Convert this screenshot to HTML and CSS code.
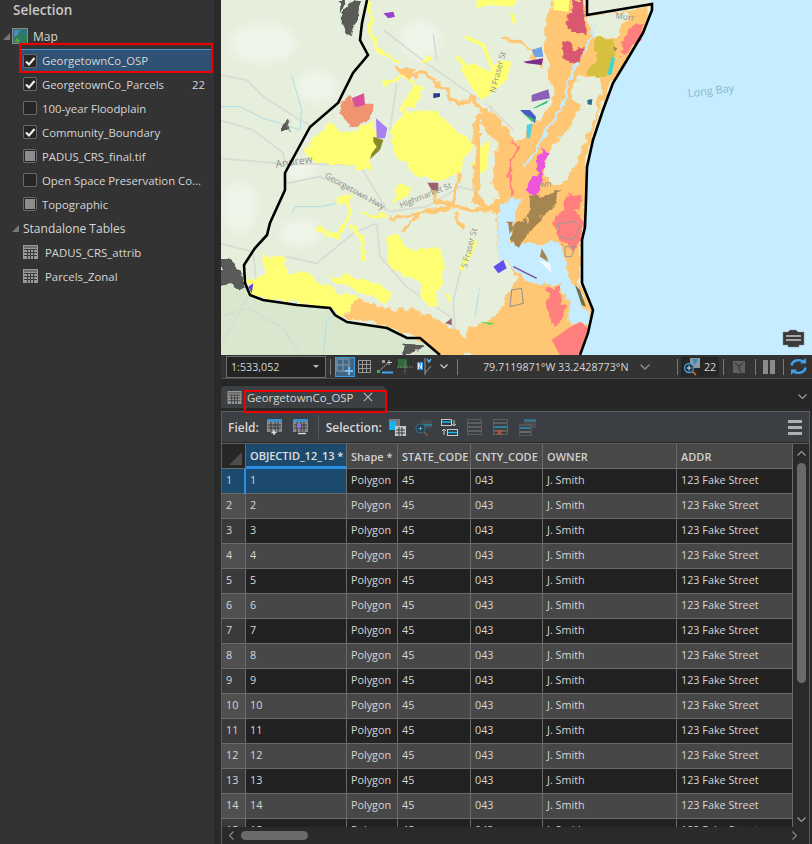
FILE: index.html
```html
<!DOCTYPE html>
<html lang="en">
<head>
    <meta charset="UTF-8">
    <meta name="viewport" content="width=device-width, initial-scale=1.0">
    <title>GeorgetownCo_OSP</title>
    <link rel="stylesheet" href="styles.css">
</head>
<body>
<svg class="defs" width="0" height="0">
    <filter id="rough" color-interpolation-filters="sRGB">
        <feTurbulence type="fractalNoise" baseFrequency=".03" numOctaves="3" seed="4"/>
        <feDisplacementMap in="SourceGraphic" scale="34" xChannelSelector="R" yChannelSelector="G"/>
    </filter>
    <filter id="soft"><feGaussianBlur stdDeviation="14"/></filter>
    <symbol id="check" viewBox="0 0 14 14">
        <path d="M3 7.5 L6 10.5 L11.5 4" fill="none" stroke="#f2f2f2" stroke-width="2"/>
    </symbol>
    <symbol id="grid" viewBox="0 0 15 14">
        <rect x="0" y="0" width="15" height="14" fill="#9a9a9a"/>
        <rect x="1" y="1" width="13" height="2" fill="#6d6d6d"/>
        <path d="M1 4.5H14M1 7.5H14M1 10.5H14" stroke="#3a3a3a" stroke-width="1"/>
        <path d="M4.5 4V14M7.5 4V14M10.5 4V14" stroke="#3a3a3a" stroke-width="1"/>
    </symbol>
    <symbol id="rows" viewBox="0 0 15 16">
        <rect x="0.5" y="0.5" width="14" height="15" fill="#3c3f42" stroke="#5e5e5e"/>
        <path d="M1 4H14M1 8H14M1 12H14" stroke="#5e5e5e" stroke-width="2"/>
    </symbol>
</svg>

<div class="app">
    <aside class="sidebar">
        <h2 class="panel-title">Selection</h2>
        <ul class="tree">
            <li class="tree-row group">
                <span class="twisty"></span>
                <svg class="map-icon" width="16" height="16" viewBox="0 0 16 16">
                    <rect x="0.5" y="0.5" width="15" height="15" fill="#2e7d5a" stroke="#8a8a8a"/>
                    <path d="M2 2H8L5 8L2 9Z" fill="#3f8fc0"/>
                    <path d="M9 2H14V7L11 6Z" fill="#2b6fa8"/>
                    <path d="M2 14L5 10L8 13L7 14Z" fill="#5aa04a"/>
                </svg>
                <span>Map</span>
            </li>
            <li class="tree-row layer selected"><span class="box"><svg width="14" height="14"><use href="#check"/></svg></span><span>GeorgetownCo_OSP</span></li>
            <li class="tree-row layer"><span class="box"><svg width="14" height="14"><use href="#check"/></svg></span><span>GeorgetownCo_Parcels</span><span class="count">22</span></li>
            <li class="tree-row layer"><span class="box"></span><span>100-year Floodplain</span></li>
            <li class="tree-row layer"><span class="box"><svg width="14" height="14"><use href="#check"/></svg></span><span>Community_Boundary</span></li>
            <li class="tree-row layer"><span class="box mixed"></span><span>PADUS_CRS_final.tif</span></li>
            <li class="tree-row layer"><span class="box"></span><span>Open Space Preservation Co...</span></li>
            <li class="tree-row layer"><span class="box mixed"></span><span>Topographic</span></li>
            <li class="tree-row section"><span class="twisty"></span><span>Standalone Tables</span></li>
            <li class="tree-row standalone"><svg width="15" height="14"><use href="#grid"/></svg><span>PADUS_CRS_attrib</span></li>
            <li class="tree-row standalone"><svg width="15" height="14"><use href="#grid"/></svg><span>Parcels_Zonal</span></li>
        </ul>
    </aside>

    <main class="workspace">
        <div class="map">
            <svg class="map-canvas" width="591" height="355" viewBox="221 0 591 355">
                <rect x="221" y="0" width="591" height="355" fill="#e5efdb"/>
                <g transform="translate(220 0) scale(.33333)">
                    <path d="M90 885L130 900L230 915L330 925L345 945L380 965L500 985L560 1015L600 1015L660 1065L0 1065L0 855L75 850Z" fill="#d9e7ce"/>
                    <g fill="#f0f5ea" filter="url(#soft)">
                        <ellipse cx="130" cy="130" rx="100" ry="60"/>
                        <ellipse cx="290" cy="260" rx="60" ry="50"/>
                        <ellipse cx="240" cy="510" rx="50" ry="30"/>
                        <ellipse cx="60" cy="620" rx="50" ry="80"/>
                        <ellipse cx="600" cy="120" rx="60" ry="60"/>
                        <ellipse cx="240" cy="700" rx="60" ry="40"/>
                    </g>
                    <g fill="none" stroke="#d8dcd4" stroke-width="5">
                        <path d="M0 225L80 240L130 290L240 360L270 375"/>
                        <path d="M0 360L100 390L190 460L200 520"/>
                        <path d="M0 475L170 490L420 495L500 630"/>
                        <path d="M200 550L300 530L390 570L510 635L620 620L720 560L820 590"/>
                        <path d="M470 670L480 770L560 860L690 950L700 990"/>
                        <path d="M730 780L700 900L705 1000"/>
                        <path d="M0 730L100 755L110 860M200 770L290 790L400 700L470 670"/>
                        <path d="M0 950L85 925L190 985L240 1065M85 890L0 1040"/>
                        <path d="M490 90L620 190L720 260L810 320L880 390"/>
                        <path d="M640 100L650 180M530 250L510 390M860 150L820 290L800 400L820 560"/>
                    </g>
                    <g fill="none" stroke="#b2dde8" stroke-width="3">
                        <path d="M0 320L60 320L130 355L180 370L240 390L245 330L215 225"/>
                        <path d="M215 640L225 620L300 620L350 610"/>
                        <path d="M310 1065L320 960L345 945M780 860L765 950"/>
                    </g>
                    <g fill="#5a5a58" filter="url(#rough)">
                        <path d="M365 35L395 5L420 10L410 60L395 105L365 70Z"/>
                        <path d="M350 0L375 0L360 40Z"/>
                        <path d="M188 375L205 358L215 390L190 395Z"/>
                        <path d="M0 780L40 780L70 830L78 870L30 850L0 855Z"/>
                        <path d="M540 1035L580 1030L610 1040L600 1055L560 1060Z"/>
                    </g>
                    <g filter="url(#rough)">
                        <g fill="#ffff73">
                            <path d="M250 450L330 365L360 400L400 390L450 370L480 410L470 440L445 490L450 515L400 495L300 490L270 480Z"/>
                            <path d="M510 450L520 370L560 335L640 330L700 380L760 435L730 480L720 520L650 545L590 530L560 495L520 470Z"/>
                            <path d="M85 840L130 830L130 790L120 750L150 770L190 775L200 810L280 825L300 850L340 865L415 895L370 945L330 920L230 905L130 895L90 880Z"/>
                            <path d="M330 830L400 830L480 855L520 880L500 910L440 880L340 850Z"/>
                            <path d="M500 710L530 705L560 740L660 750L675 800L660 860L670 880L700 900L680 905L660 860L650 925L620 915L600 850L540 820L510 790Z"/>
                            <path d="M510 610L530 560L580 555L570 590L520 610Z"/>
                            <path d="M540 340L580 250L610 260L590 320Z"/>
                            <path d="M760 490L775 480L770 540L755 530Z"/>
                        </g>
                        <g fill="none" stroke="#ffff73" stroke-width="11">
                            <path d="M290 685L350 710L380 670L385 640L390 590M350 605L400 590M420 640L500 650M390 680L425 710L430 780"/>
                            <path d="M445 0L450 90L460 130L530 190M480 260L540 230L590 250M610 190L630 170"/>
                            <path d="M770 720L720 810"/>
                        </g>
                        <g fill="none" stroke="#ffc773" stroke-width="11">
                            <path d="M530 205L590 220L650 240L690 290L720 320L750 290L780 320L830 360L880 420"/>
                            <path d="M510 650L620 640L700 620L820 640M640 570L650 600L700 620M720 520L700 620M550 690L610 640M700 640L730 680"/>
                        </g>
                        <path d="M530 205L585 205L570 240L540 230Z" fill="#ffc773"/>
                        <path d="M415 895L480 920L600 935L680 975L740 1010L745 985L840 960L870 890L900 840L900 1065L660 1065L590 1010L500 975L380 950L370 945Z" fill="#ffc773"/>
                        <path d="M380 285L420 320L455 320L440 360L415 380L385 370L355 345L360 320Z" fill="#f09370"/>
                    </g>
                    <path d="M395 295L432 280L435 315L405 322Z" fill="#d9509a"/>
                    <path d="M468 355L502 385L495 415L470 415Z" fill="#a980f0"/>
                    <path d="M460 410L490 420L480 450L450 478L455 460L470 440L460 425Z" fill="#8a8a28"/>
                    <path d="M490 40L520 35L525 50L505 55Z" fill="#9a40d0"/>
                    <path d="M640 280L660 280L660 290L640 295Z" fill="#2a3a90"/>
                    <path d="M622 548L655 548L655 572L635 570Z" fill="#9c6070"/>
                    <path d="M85 860L100 850L95 880Z" fill="#5a40d8"/>
                    <path d="M675 970L695 955L695 975Z" fill="#9c6070"/>
                    <path d="M780 970L810 960L830 970Z" fill="#55dd55"/>
                    <g class="map-label">
                        <text class="town-label" x="168" y="503" transform="rotate(-8 168 503)">Andrew</text>
                        <text x="313" y="532" transform="rotate(29 313 532)">Georgetown Hwy</text>
                        <text x="543" y="625" transform="rotate(-22 543 625)">Highmarket St</text>
                        <text x="740" y="805" transform="rotate(-75 740 805)">S Fraser St</text>
                    </g>
                </g>
                <g transform="translate(480 0) scale(.33333)">
                    <g filter="url(#rough)">
                        <path d="M220 -10L320 -10L322 48L510 20L490 100L400 240L350 340L322 480L318 600L315 680L300 720L300 850L338 930L325 1075L-20 1075L-20 985L60 930L110 835L60 770L45 640L-20 610L-20 350L30 340L60 390L100 420L130 410L170 360L210 320L220 260L205 230L190 100Z" fill="#ffc773"/>
                        <path d="M322 50L440 35L430 85L405 115L345 112Z" fill="#e5efdb"/>
                        <path d="M300 220L350 230L365 270L330 390L300 460L260 545L210 550L195 500L215 440L260 390L300 330L270 290Z" fill="#e5efdb"/>
                        <path d="M0 360L30 420L55 440L45 480L40 560L60 600L30 610L0 590Z" fill="#e5efdb"/>
                        <path d="M0 660L35 630L50 700L60 770L30 790L0 780Z" fill="#e5efdb"/>
                        <path d="M0 800L40 790L100 830L60 920L20 960L0 960Z" fill="#e5efdb"/>
                        <path d="M0 30L90 20L190 120L205 230L210 290L130 340L0 300Z" fill="#e5efdb"/>
                        <path d="M0 330L30 345L70 395M60 120L130 130L190 200" fill="none" stroke="#ffc773" stroke-width="9"/>
                        <path d="M350 70L300 170L260 260L240 330L180 430L130 500" fill="none" stroke="#c5ecff" stroke-width="7"/>
                        <path d="M50 640L75 600L130 590L100 680L90 730L180 730L250 730L250 780L300 850L315 930L330 940L320 965L270 975L265 900L240 855L140 845L95 810L60 770Z" fill="#c5ecff"/>
                        <path d="M250 760L285 740L300 850L320 930L295 860L265 830Z" fill="#ffc773"/>
                    </g>
                    <path d="M515 0L996 0L996 1065L300 1065L325 1000L338 930L305 850L305 720L315 680L318 600L320 500L340 420L370 330L400 250L440 180L490 100L515 30L515 12Z" fill="#c5ecff"/>
                    <g fill="#ffff73">
                        <path d="M0 440L30 420L20 510L0 520Z"/>
                        <path d="M-10 0L110 0L100 20L30 15L-10 25Z"/>
                        <path d="M222 0L268 0L265 35L220 30Z"/>
                        <path d="M-60 205L-20 190L30 215L60 180L95 185L80 240L40 275L5 300L-20 270Z"/>
                    </g>
                    <path d="M-45 110L10 135L40 210M95 40L105 70M-70 170L-20 220" fill="none" stroke="#ffff73" stroke-width="11"/>
                    <g filter="url(#rough)">
                        <path d="M275 0L315 0L320 100L262 95L255 70L270 40Z" fill="#d95870"/>
                        <path d="M250 125L275 120L280 145L305 145L300 185L270 195L245 175L240 150Z" fill="#d95870"/>
                        <g fill="#ff7f7f">
                            <path d="M430 120L470 70L490 70L470 125L440 165L420 160Z"/>
                            <path d="M260 580L295 585L310 610L290 640L315 665L305 710L285 750L255 730L230 700L220 660L250 625Z"/>
                            <path d="M195 860L245 860L250 930L240 985L210 975Z"/>
                        </g>
                        <path d="M95 425L120 440L90 490L95 590" fill="none" stroke="#ff7f7f" stroke-width="7"/>
                        <path d="M345 120L370 108L400 120L405 170L385 230L345 232L320 215L350 170Z" fill="#d6c040"/>
                        <g fill="#a58550">
                            <path d="M145 590L245 570L215 620L180 670L130 720L115 740L90 715L105 680L140 660Z"/>
                            <path d="M80 665L100 665L100 695L85 695Z"/>
                        </g>
                        <path d="M185 445L213 460L195 490L190 550L165 585L145 585L150 545L175 520L168 490Z" fill="#ee55dd"/>
                    </g>
                    <path d="M300 965L325 985L295 1065L240 1065L215 1020L265 985Z" fill="#ff7f7f"/>
                    <path d="M395 170L405 175L395 225L382 225Z" fill="#3fd8d0"/>
                    <path d="M185 745L200 770L205 785L180 770Z" fill="#a58550"/>
                    <path d="M400 140L412 145L405 155Z" fill="#a58550"/>
                    <path d="M155 150L185 140L190 170L165 172Z" fill="#6fa5e8"/>
                    <path d="M130 185L190 175L185 195L140 190Z" fill="#7b2d8b"/>
                    <path d="M155 285L205 268L210 295L155 305Z" fill="#8a60b8"/>
                    <path d="M158 325L205 300L200 310L165 325Z" fill="#35c080"/>
                    <path d="M120 330L150 330L168 350L165 370L135 345Z" fill="#4a58c8"/>
                    <path d="M130 340L165 360L155 365Z" fill="#30d060"/>
                    <path d="M140 375L158 370L150 415L140 415Z" fill="#50d0e0"/>
                    <path d="M322 300L337 297L335 315L323 313Z" fill="#2c6e8a"/>
                    <path d="M40 800L70 780L80 805L55 820Z" fill="#5f50f0"/>
                    <path d="M285 855L300 870L318 920L305 915Z" fill="#6e7040"/>
                    <path d="M100 800L170 835" fill="none" stroke="#7b4d9b" stroke-width="4"/>
                    <path d="M175 780L210 790L215 820Z" fill="#f4fbff"/>
                    <path d="M95 870L125 865L130 910L90 920Z" fill="none" stroke="#8f8f8f" stroke-width="3"/>
                    <path d="M235 670L285 665L300 680L280 720L240 710ZM255 740L285 740L275 770L255 770Z" fill="none" stroke="#9a9a9a" stroke-width="3"/>
                    <path d="M0 965L45 970L30 975Z" fill="#55dd55"/>
                    <g class="map-label">
                        <text x="405" y="55" transform="rotate(8 405 55)">Murr</text>
                        <text x="180" y="562" transform="rotate(-6 180 562)">wn</text>
                        <text x="45" y="280" transform="rotate(-75 45 280)">N Fraser St</text>
                    </g>
                    <text class="bay-label" x="625" y="292" transform="rotate(-7 625 292)">Long Bay</text>
                </g>
                <path d="M367 0L362 23L360 40L368 55L353 73L338 103L310 127L285 173L285 190L270 223L267 235L255 248L244 265L245 283L250 295L263 300L297 305L330 308L335 315L347 322L387 328L407 338L420 338L440 355" fill="none" stroke="#000" stroke-width="2.6"/>
                <path d="M587 0L587 15L652 4L652 10L643 33L627 60L613 83L603 110L593 140L587 167L586 200L585 227L582 240L582 283L593 310L588 333L580 355" fill="none" stroke="#000" stroke-width="2.6"/>
                <g>
                    <path d="M783 332H788L790 330H796L798 332H804V345H799V347H788V345H783Z" fill="#3a3a3a" stroke="#8a8a8a" stroke-width=".5"/>
                    <path d="M786 336H801M786 340H801" stroke="#c9c9c9" stroke-width="1.4"/>
                </g>
            </svg>
        </div>

        <div class="statusbar">
            <div class="scale-box"><span>1:533,052</span><span class="caret"></span></div>
            <span class="sep first"></span>
            <span class="snap-btn">
                <svg width="18" height="18" viewBox="0 0 18 18">
                    <path d="M1 1H13V13H1ZM7 1V13M1 7H13" fill="none" stroke="#8f9aa4" stroke-width="1"/>
                    <path d="M13 9V17M9 13H17" stroke="#7cc0f0" stroke-width="2"/>
                </svg>
            </span>
            <svg class="st-icon grid-btn" width="13" height="13" viewBox="0 0 13 13">
                <path d="M.5 .5H12.5V12.5H.5ZM4.5 .5V12.5M8.5 .5V12.5M.5 4.5H12.5M.5 8.5H12.5" fill="none" stroke="#9a9a9a"/>
            </svg>
            <svg class="st-icon snap-icon" width="16" height="14" viewBox="0 0 16 14">
                <path d="M2 11L11 3" stroke="#c9c9c9" stroke-dasharray="2 1"/>
                <rect x="0" y="10" width="3" height="3" fill="#39b56a"/>
                <rect x="5" y="0" width="3" height="3" fill="#a0a0a0"/>
                <path d="M12 0V5M10 2.5H15" stroke="#c9c9c9"/>
                <path d="M5 12.5H16" stroke="#3fa9f5" stroke-width="2"/>
            </svg>
            <svg class="st-icon guide-icon" width="16" height="15" viewBox="0 0 16 15">
                <rect x="1" y="0" width="9" height="9" fill="#2f6b3a"/>
                <path d="M0 8H16M8 2V15" stroke="#7a7a7a" stroke-dasharray="2 1"/>
            </svg>
            <svg class="st-icon north-icon" width="16" height="17" viewBox="0 0 16 17">
                <rect x="0" y="4" width="6" height="8" fill="#2f8fe0"/>
                <path d="M1.5 11V5L4.5 11V5" fill="none" stroke="#e8f4ff"/>
                <path d="M8 0V17M8 15L14 8" stroke="#9a9a9a"/>
                <path d="M10 1L12 4L14 1" fill="none" stroke="#5cb8f0" stroke-width="1.4"/>
            </svg>
            <svg class="chev-small" width="8" height="5" viewBox="0 0 8 5"><path d="M.5 .5L4 4L7.5 .5" fill="none" stroke="#d0d0d0" stroke-width="1.2"/></svg>
            <span class="sep second"></span>
            <span class="coords">79.7119871°W 33.2428773°N</span>
            <svg class="chev-coords" width="10" height="6" viewBox="0 0 10 6"><path d="M.5 .5L5 5L9.5 .5" fill="none" stroke="#8f8f8f" stroke-width="1.4"/></svg>
            <span class="sep third"></span>
            <span class="sel-count">
                <svg width="18" height="18" viewBox="0 0 18 18">
                    <path d="M7 0H17V10H10L7 6Z" fill="#8f9aa0"/>
                    <path d="M9 1L12 7L15 1Z" fill="#2f8fc0"/>
                    <circle cx="6" cy="10" r="4.5" fill="#1d2f3d" stroke="#3fa0d8" stroke-width="1.3"/>
                    <path d="M6 7.5V12.5M3.5 10H8.5" stroke="#c9e4f5"/>
                    <path d="M9.5 13.5L13 17" stroke="#b06a2a" stroke-width="2"/>
                </svg>
                <span>22</span>
            </span>
            <span class="sep after-count"></span>
            <svg class="st-icon" width="12" height="12" viewBox="0 0 12 12">
                <rect width="12" height="12" fill="#5f5f5f"/>
                <path d="M2 2L6 5L10 2M6 5V8L8 11" fill="none" stroke="#2b2b2b"/>
            </svg>
            <span class="sep before-pause"></span>
            <span class="pause"><i></i><i></i></span>
            <span class="sep before-refresh"></span>
            <svg width="17" height="17" viewBox="0 0 17 17">
                <path d="M1.5 7.5A7 6 0 0 1 13.5 4" fill="none" stroke="#3fa0e8" stroke-width="2.4"/>
                <path d="M10 5.5H16V0Z" fill="#3fa0e8"/>
                <path d="M15.5 9.5A7 6 0 0 1 3.5 13" fill="none" stroke="#3fa0e8" stroke-width="2.4"/>
                <path d="M7 11.5H1V17Z" fill="#3fa0e8"/>
            </svg>
        </div>

        <div class="tabstrip">
            <div class="tab">
                <svg width="15" height="13"><use href="#grid"/></svg>
                <span>GeorgetownCo_OSP</span>
                <svg class="tab-close" width="10" height="10" viewBox="0 0 11 11"><path d="M1 1L10 10M10 1L1 10" stroke="#bdbdbd" stroke-width="1.2"/></svg>
            </div>
            <svg class="tab-chevron" width="9" height="5" viewBox="0 0 9 5"><path d="M.5 .5L4.5 4.5L8.5 .5" fill="none" stroke="#9a9a9a" stroke-width="1.2"/></svg>
        </div>

        <section class="pane">
            <div class="toolbar">
                <span class="tool-label">Field:</span>
                <svg class="tool" width="15" height="16" viewBox="0 0 15 16">
                    <rect width="15" height="3" fill="#3f90c8"/>
                    <path d="M0 3H15V13H0Z" fill="#8a8a8a"/>
                    <path d="M1 6H14M1 9H14M4 3V13M8 3V13M11 3V13" stroke="#33363a"/>
                    <path d="M7 11V16M4.5 13.5H9.5" stroke="#e0e0e0" stroke-width="1.4"/>
                </svg>
                <svg class="tool second-tool" width="15" height="16" viewBox="0 0 15 16">
                    <rect width="15" height="3" fill="#3f90c8"/>
                    <path d="M0 3H15V13H0Z" fill="#8a8a8a"/>
                    <path d="M1 6H14M1 9H14M4 3V13M8 3V13M11 3V13" stroke="#33363a"/>
                    <rect x="4" y="5" width="4" height="4" fill="#8a70d8"/>
                    <path d="M5 14.5H13" stroke="#e0e0e0" stroke-width="1.4"/>
                </svg>
                <span class="tool-sep"></span>
                <span class="tool-label">Selection:</span>
                <span class="tool-group">
                    <svg width="17" height="17" viewBox="0 0 17 17">
                        <rect x="0" y="0" width="11" height="11" fill="#7a7a7a"/>
                        <path d="M1 2H7V11H1Z" fill="#16b4f0"/>
                        <rect x="6" y="7" width="11" height="10" fill="#c8c8c8"/>
                        <path d="M7 11H16M7 14H16M10 8V17M13 8V17" stroke="#33363a"/>
                    </svg>
                    <svg width="17" height="17" viewBox="0 0 17 17">
                        <path d="M6 1H17V9H10" fill="#4a4d50"/>
                        <path d="M9 6H17" stroke="#2c8aa8" stroke-width="1.6"/>
                        <circle cx="5.5" cy="9.5" r="4.5" fill="#2b3a45" stroke="#2f7396" stroke-width="1.2"/>
                        <path d="M5.5 7.5V11.5M3.5 9.5H7.5" stroke="#6fa8c8"/>
                        <path d="M9 13L12.5 16.5" stroke="#7c5a38" stroke-width="1.6"/>
                    </svg>
                    <svg width="17" height="17" viewBox="0 0 17 17">
                        <rect x=".5" y=".5" width="10" height="6" fill="#33363a" stroke="#c8c8c8"/>
                        <path d="M1 3H10" stroke="#16b4f0" stroke-width="1.5"/>
                        <rect x="6.5" y="10.5" width="10" height="6" fill="#33363a" stroke="#c8c8c8"/>
                        <path d="M7 13.5H16" stroke="#16b4f0" stroke-width="1.5"/>
                        <path d="M13 1V7M11 5L13 7L15 5M3 10V16M1 12L3 10L5 12" fill="none" stroke="#c8c8c8"/>
                    </svg>
                    <svg width="15" height="16"><use href="#rows"/></svg>
                    <svg width="15" height="16" viewBox="0 0 15 16">
                        <use href="#rows" width="15" height="16"/>
                        <path d="M1 8H14" stroke="#2b7f9c" stroke-width="2"/>
                        <path d="M4 11L9 16M9 11L4 16" stroke="#b0543a" stroke-width="1.8"/>
                    </svg>
                    <svg width="17" height="17" viewBox="0 0 17 17">
                        <rect x="5" y="0" width="12" height="9" fill="#4a4d50"/>
                        <path d="M5 1.5H17" stroke="#2b7f9c" stroke-width="2"/>
                        <rect x="0" y="6" width="12" height="11" fill="#3c3f42" stroke="#6a6a6a"/>
                        <path d="M1 9H11" stroke="#2b7f9c" stroke-width="2"/>
                        <path d="M1 13H11" stroke="#6a6a6a" stroke-width="2"/>
                    </svg>
                </span>
                <span class="menu-btn"><i></i><i></i><i></i></span>
            </div>

            <div class="table-area">
                <div class="table-clip">
                    <table>
                        <thead>
                            <tr>
                                <th class="col-row"><span class="corner"></span></th>
                                <th class="col-id active">OBJECTID_12_13 *</th>
                                <th class="col-shape">Shape *</th>
                                <th class="col-state">STATE_CODE</th>
                                <th class="col-cnty">CNTY_CODE</th>
                                <th class="col-owner">OWNER</th>
                                <th class="col-addr">ADDR</th>
                            </tr>
                        </thead>
                        <tbody id="rowsBody"></tbody>
                    </table>
                </div>
                <div class="vscroll">
                    <svg width="9" height="5" viewBox="0 0 9 5"><path d="M.5 4.5L4.5 .5L8.5 4.5" fill="none" stroke="#9a9a9a" stroke-width="1.2"/></svg>
                    <span class="vthumb"></span>
                    <svg class="vdown" width="9" height="5" viewBox="0 0 9 5"><path d="M.5 .5L4.5 4.5L8.5 .5" fill="none" stroke="#9a9a9a" stroke-width="1.2"/></svg>
                </div>
            </div>
            <div class="hscroll">
                <svg width="5" height="9" viewBox="0 0 5 9"><path d="M4.5 .5L.5 4.5L4.5 8.5" fill="none" stroke="#8a8a8a" stroke-width="1.2"/></svg>
                <span class="hthumb"></span>
                <svg class="hright" width="5" height="9" viewBox="0 0 5 9"><path d="M.5 .5L4.5 4.5L.5 8.5" fill="none" stroke="#8a8a8a" stroke-width="1.2"/></svg>
            </div>
        </section>
    </main>
</div>

<script>
    // 15 rows, last one is cut off by the scroll area
    const rowsBody = document.getElementById('rowsBody');
    for (let i = 1; i <= 15; i++) {
        const row = document.createElement('tr');
        if (i === 1) row.className = 'current';
        row.innerHTML = `
            <td class="row-head">${i}</td>
            <td class="id-cell">${i}</td>
            <td>Polygon</td>
            <td>45</td>
            <td>043</td>
            <td>J. Smith</td>
            <td>123 Fake Street</td>
        `;
        rowsBody.appendChild(row);
    }
</script>
</body>
</html>
```

FILE: styles.css
```css
* {
    box-sizing: border-box;
}
body {
    margin: 0;
    background-color: #2a2a2a;
    color: #d6d6d6;
    font-family: 'Open Sans', 'Noto Sans', sans-serif;
    font-size: 12px;
    overflow: hidden;
}
.defs {
    display: block;
    height: 0;
}
.app {
    display: flex;
    height: 844px;
    overflow: hidden;
}

/* contents pane */
.sidebar {
    width: 214px;
    flex: none;
    background-color: #333333;
    margin-right: 7px;
}
.panel-title {
    margin: 0;
    padding: 0 0 0 13px;
    height: 24px;
    line-height: 20px;
    font-size: 13.5px;
    font-weight: 600;
    color: #c8c8c8;
}
.tree {
    list-style: none;
    margin: 0;
    padding: 0;
}
.tree-row {
    display: flex;
    align-items: center;
    height: 24px;
    white-space: nowrap;
}
.twisty {
    width: 0;
    height: 0;
    border-left: 7px solid transparent;
    border-bottom: 7px solid #777;
}
.group {
    padding-left: 3px;
}
.map-icon {
    margin: 0 5px 0 2px;
}
.layer {
    padding-left: 23px;
    gap: 5px;
    font-size: 11.35px;
}
.box {
    width: 14px;
    height: 14px;
    flex: none;
    border: 1px solid #6b6b6b;
    border-radius: 2px;
    background-color: #262626;
    position: relative;
}
.box svg {
    position: absolute;
    left: -1px;
    top: -1px;
}
.box.mixed::after {
    content: '';
    display: block;
    width: 10px;
    height: 10px;
    margin: 1px;
    background-color: #8c8c8c;
}
.count {
    margin-left: auto;
    margin-right: 9px;
}
.selected {
    position: relative;
    height: 22px;
    margin: 1px 1px 1px 21px;
    padding-left: 2px;
    background-color: #2f5173;
    border-top: 1px solid #4d93cf;
}
.selected::after {
    content: '';
    position: absolute;
    left: -2px;
    top: -7px;
    right: 0;
    bottom: -2px;
    border: 2px solid #f00000;
}
.section {
    padding-left: 12px;
    gap: 4px;
}
.standalone {
    padding-left: 23px;
    gap: 7px;
    font-size: 11.4px;
}

/* map view */
.workspace {
    flex: 1;
    min-width: 0;
    display: flex;
    flex-direction: column;
}
.map {
    height: 355px;
    flex: none;
}
.map-canvas {
    display: block;
}
.map-label text {
    font-size: 25px;
    fill: #8f8f8f;
}
.map-label .town-label {
    font-size: 31px;
}
.bay-label {
    font-size: 33px;
    fill: #86b9cc;
}

.statusbar {
    height: 24px;
    flex: none;
    display: flex;
    align-items: center;
    padding-left: 5px;
    font-size: 10.7px;
    background-color: #333333;
    border-bottom: 1px solid #4d4d4d;
}
.scale-box {
    width: 100px;
    height: 22px;
    display: flex;
    align-items: center;
    justify-content: space-between;
    padding: 0 6px 0 4px;
    background-color: #232323;
    border: 1px solid #6e6e6e;
}
.caret {
    width: 0;
    height: 0;
    border-left: 3px solid transparent;
    border-right: 3px solid transparent;
    border-top: 3px solid #bbb;
}
.sep {
    width: 1px;
    height: 16px;
    flex: none;
    background-color: #7a7a7a;
}
.sep.first {
    margin: 0 4px;
}
.snap-btn {
    width: 20px;
    height: 20px;
    flex: none;
    display: flex;
    align-items: center;
    justify-content: center;
    background-color: #3f6788;
    border: 1px solid #3f9ae0;
}
.grid-btn {
    margin-left: 3px;
}
.snap-icon {
    margin-left: 6px;
}
.guide-icon {
    margin-left: 4px;
}
.north-icon {
    margin-left: 4px;
}
.chev-small {
    margin-left: 7px;
}
.sep.second {
    margin-left: 9px;
}
.coords {
    margin-left: 25px;
    white-space: nowrap;
    width: 147px;
}
.chev-coords {
    margin-left: 10px;
}
.sep.third {
    margin: 0 3px 0 27px;
}
.sel-count {
    display: flex;
    align-items: center;
    gap: 3px;
    height: 20px;
    width: 38px;
    padding-left: 2px;
    background-color: #262626;
}
.sep.after-count {
    margin: 0 9px 0 4px;
}
.sep.before-pause {
    margin: 0 7px 0 10px;
}
.sep.before-refresh {
    margin: 0 6px 0 8px;
}
.pause {
    display: flex;
    gap: 2px;
}
.pause i {
    display: block;
    width: 5px;
    height: 14px;
    background-color: #8a8a8a;
}

/* table view */
.tabstrip {
    height: 29px;
    flex: none;
    display: flex;
    align-items: flex-end;
    font-size: 11.4px;
    background-color: #262626;
    position: relative;
}
.tab {
    width: 166px;
    height: 22px;
    display: flex;
    align-items: center;
    gap: 4px;
    padding-left: 6px;
    background-color: #3d4043;
    border-radius: 3px 6px 0 0;
    position: relative;
}
.tab span {
    margin-left: 1px;
}
.tab::after {
    content: '';
    position: absolute;
    left: 23px;
    top: 4px;
    width: 139px;
    height: 19px;
    border: 2px solid #f00000;
}
.tab-close {
    margin-left: 6px;
}
.tab-chevron {
    margin: 0 5px 9px auto;
}
.pane {
    flex: 1;
    min-height: 0;
    display: flex;
    flex-direction: column;
    margin-top: 3px;
    margin-right: 2px;
    border-top: 1px solid #5a5d60;
    border-left: 1px solid #5a5d60;
    border-right: 1px solid #5a5d60;
    background-color: #2a2a2a;
}
.toolbar {
    height: 30px;
    flex: none;
    display: flex;
    align-items: center;
    padding-left: 6px;
    background-color: #3b3e42;
}
.tool-label {
    font-weight: 600;
    color: #d8d8d8;
}
.tool {
    margin-left: 8px;
}
.second-tool {
    margin-left: 11px;
}
.tool-sep {
    width: 1px;
    height: 24px;
    background-color: #55585b;
    margin: 0 7px 0 10px;
}
.tool-group {
    display: grid;
    grid-template-columns: repeat(6, 17px);
    gap: 9px;
    align-items: center;
    margin-left: 7px;
}
.menu-btn {
    margin-left: auto;
    margin-right: 7px;
    display: flex;
    flex-direction: column;
    gap: 3px;
}
.menu-btn i {
    display: block;
    width: 14px;
    height: 3px;
    background-color: #b0b0b0;
}
.table-area {
    flex: 1;
    min-height: 0;
    display: flex;
    margin-top: 1px;
    border-top: 1px solid #5a5d60;
}
.table-clip {
    width: 571px;
    flex: none;
    overflow: hidden;
}
table {
    width: 571px;
    table-layout: fixed;
    border-collapse: separate;
    border-spacing: 0;
    font-size: 10.8px;
}
th, td {
    height: 25px;
    padding: 0 4px;
    text-align: left;
    white-space: nowrap;
    overflow: hidden;
    border-right: 1px solid #6a6a6a;
    border-bottom: 1px solid #6a6a6a;
}
td {
    padding-bottom: 3px;
    background-color: #222222;
}
th {
    background-color: #484848;
    font-size: 11px;
    font-weight: 600;
    color: #d0d0d0;
}
tbody tr:nth-child(even) td {
    background-color: #474747;
}
.col-row { width: 24px; background-color: #262626; position: relative; }
.col-id { width: 101px; }
.col-shape { width: 51px; }
.col-state { width: 73px; }
.col-cnty { width: 72px; }
.col-owner { width: 134px; }
.col-addr { width: 116px; }
.corner {
    position: absolute;
    right: 3px;
    bottom: 3px;
    width: 0;
    height: 0;
    border-left: 13px solid transparent;
    border-bottom: 13px solid #4d4d4d;
}
th.active {
    background-color: #1b4a6d;
    border-bottom: 3px solid #2b8fe4;
    color: #e0e0e0;
}
td.row-head {
    background-color: #3a3a3a;
}
tbody tr:nth-child(even) td.row-head {
    background-color: #505050;
}
.current td.row-head,
.current td.id-cell {
    background-color: #1b4a6d;
}
.current td.row-head {
    border-right: 2px solid #2b8fe4;
}
.vscroll {
    flex: 1;
    position: relative;
    display: flex;
    flex-direction: column;
    align-items: center;
    padding-top: 7px;
    background-color: #2a2a2a;
}
.vthumb {
    width: 9px;
    height: 220px;
    margin-top: 7px;
    background-color: #6a6a6a;
    border-radius: 5px;
}
.vdown {
    margin-top: auto;
    margin-bottom: 5px;
}
.hscroll {
    height: 17px;
    flex: none;
    display: flex;
    align-items: center;
    padding: 0 12px 0 7px;
    background-color: #2a2a2a;
}
.hthumb {
    width: 67px;
    height: 9px;
    margin-left: 7px;
    background-color: #6a6a6a;
    border-radius: 5px;
}
.hright {
    margin-left: auto;
}
```
